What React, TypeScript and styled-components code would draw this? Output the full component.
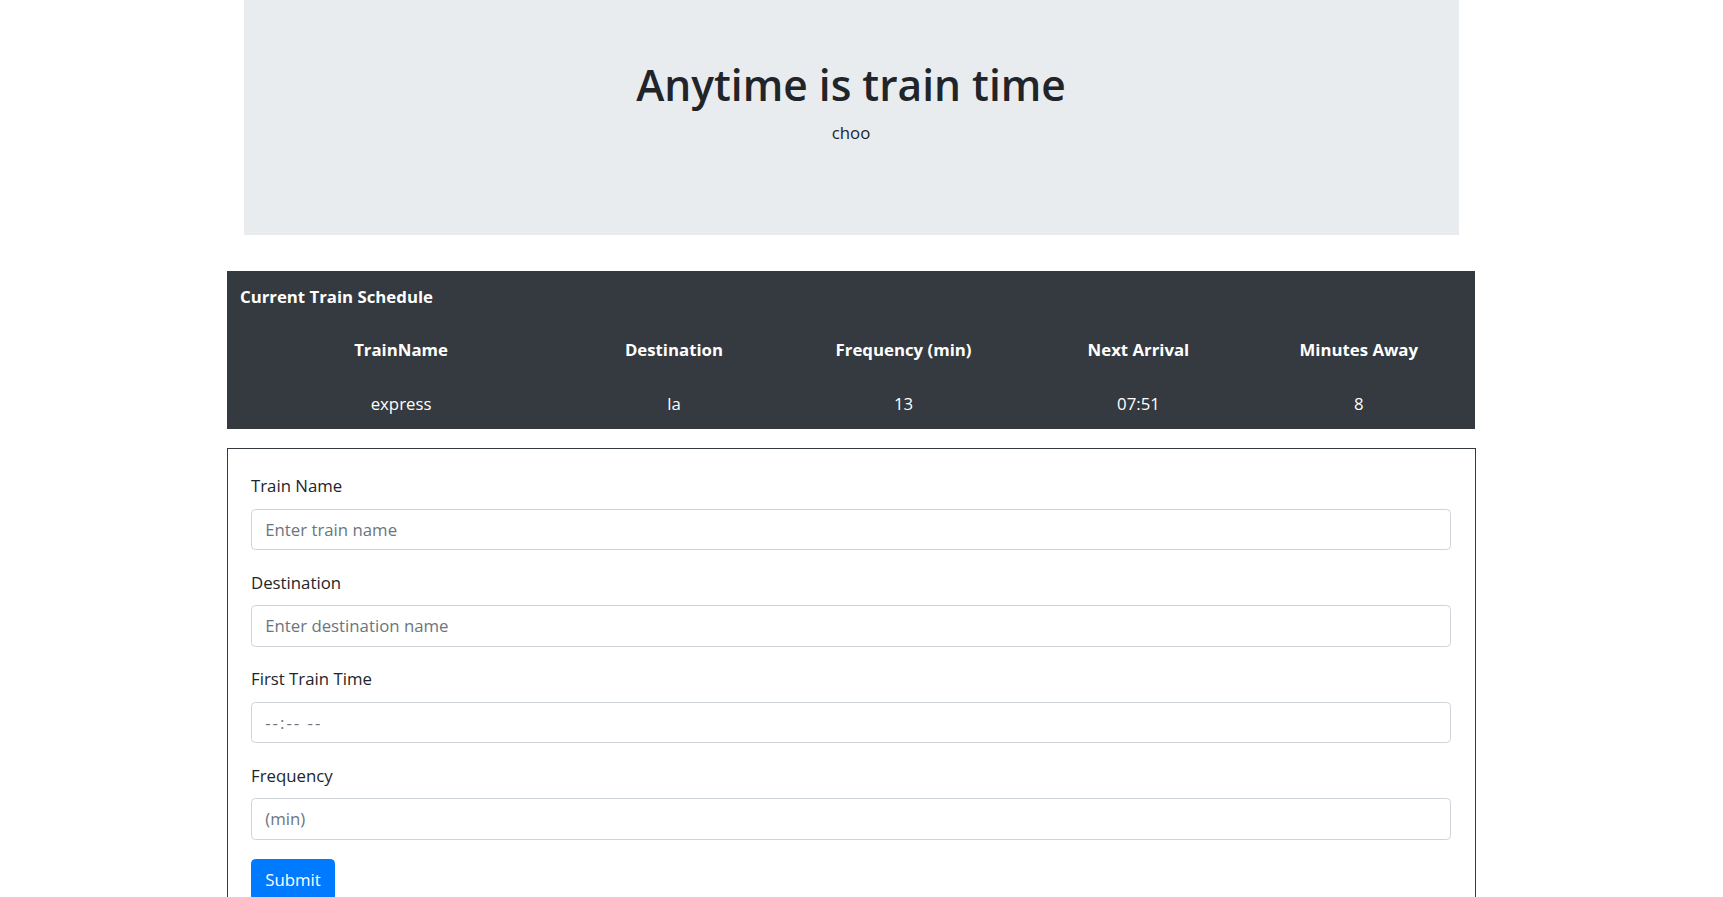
import React from "react";
import styled, { createGlobalStyle } from "styled-components";

const GlobalStyle = createGlobalStyle`
  html, body {
    margin: 0;
    padding: 0;
    background: #ffffff;
  }
  body {
    font-family: "Open Sans", "Noto Sans", sans-serif;
    font-size: 16.8px;
    line-height: 26.4px;
    color: #212529;
  }
  *, *::before, *::after { box-sizing: border-box; }
`;

const Page = styled.div`
  width: 1702px;
  padding-bottom: 40px;
`;

const Jumbotron = styled.header`
  width: 1215px;
  margin: 0 auto 36px;
  background: #e9ecef;
  padding: 58.7px 0 70.4px;
  text-align: center;
`;

const Title = styled.h1`
  margin: 0 0 8.8px;
  font-size: 42.5px;
  font-weight: 600;
  line-height: 52.8px;
  color: #212529;
`;

const Lead = styled.p`
  margin: 0 0 17.6px;
  font-weight: 400;
  color: #212529;
`;

const ScheduleTable = styled.table`
  width: 1248.5px;
  margin: 0 auto 18.8px;
  border-collapse: collapse;
  table-layout: fixed;
  background: #343a40;
  color: #ffffff;
`;

const Col = styled.col<{ $w?: number }>`
  width: ${(p) => (p.$w ? `${p.$w}px` : "auto")};
`;

const Caption = styled.th`
  padding: 13.2px;
  text-align: left;
  font-weight: 700;
  line-height: 26.4px;
`;

const HeadCell = styled.th`
  padding: 13.2px;
  text-align: center;
  font-weight: 700;
  line-height: 26.4px;
`;

const Cell = styled.td`
  padding: 15px 13.2px 11.4px;
  text-align: center;
  font-weight: 400;
  line-height: 26.4px;
`;

const FormCard = styled.form`
  width: 1249px;
  margin: 0 auto;
  border: 1px solid #343a40;
  padding: 24.5px 23.5px 30px;
`;

const Field = styled.div`
  margin-bottom: 19.5px;
`;

const Label = styled.label`
  display: block;
  margin-bottom: 8.8px;
  color: #212529;
`;

const Input = styled.input<{ $spacedHint?: boolean }>`
  display: block;
  width: 100%;
  height: 41.8px;
  padding: 6.6px 13.2px;
  font-family: inherit;
  font-size: 16.8px;
  line-height: 26.4px;
  color: #495057;
  background: #ffffff;
  border: 1px solid #ced4da;
  border-radius: 4.4px;
  outline: none;

  &::placeholder {
    color: #6c757d;
    opacity: 1;
    letter-spacing: ${(p) => (p.$spacedHint ? "2px" : "normal")};
  }
  &::-webkit-outer-spin-button,
  &::-webkit-inner-spin-button {
    -webkit-appearance: none;
    margin: 0;
  }
`;

const SubmitButton = styled.button`
  display: inline-block;
  padding: 6.6px 13.2px;
  font-family: inherit;
  font-size: 16.8px;
  line-height: 26.4px;
  color: #ffffff;
  background: #007bff;
  border: 1px solid #007bff;
  border-radius: 4.4px;
  cursor: pointer;
`;

const columns = [
  { label: "TrainName", w: 348.6 },
  { label: "Destination", w: 197.2 },
  { label: "Frequency (min)", w: 262 },
  { label: "Next Arrival", w: 207.8 },
  { label: "Minutes Away", w: 0 },
];

const trains = [
  { name: "express", destination: "la", frequency: "13", next: "07:51", away: "8" },
];

const fields = [
  { id: "train-name", label: "Train Name", placeholder: "Enter train name", type: "text", spaced: false },
  { id: "destination", label: "Destination", placeholder: "Enter destination name", type: "text", spaced: false },
  { id: "first-train", label: "First Train Time", placeholder: "--:-- --", type: "text", spaced: true },
  { id: "frequency", label: "Frequency", placeholder: "(min)", type: "number", spaced: false },
];

export default function App() {
  return (
    <>
      <GlobalStyle />
      <Page>
        <Jumbotron>
          <Title>Anytime is train time</Title>
          <Lead>choo</Lead>
        </Jumbotron>

        <ScheduleTable>
          <colgroup>
            {columns.map((c) => (
              <Col key={c.label} $w={c.w} />
            ))}
          </colgroup>
          <thead>
            <tr>
              <Caption colSpan={5}>Current Train Schedule</Caption>
            </tr>
            <tr>
              {columns.map((c) => (
                <HeadCell key={c.label}>{c.label}</HeadCell>
              ))}
            </tr>
          </thead>
          <tbody>
            {trains.map((t) => (
              <tr key={t.name}>
                <Cell>{t.name}</Cell>
                <Cell>{t.destination}</Cell>
                <Cell>{t.frequency}</Cell>
                <Cell>{t.next}</Cell>
                <Cell>{t.away}</Cell>
              </tr>
            ))}
          </tbody>
        </ScheduleTable>

        <FormCard onSubmit={(e) => e.preventDefault()}>
          {fields.map((f) => (
            <Field key={f.id}>
              <Label htmlFor={f.id}>{f.label}</Label>
              <Input id={f.id} type={f.type} placeholder={f.placeholder} $spacedHint={f.spaced} />
            </Field>
          ))}
          <SubmitButton type="submit">Submit</SubmitButton>
        </FormCard>
      </Page>
    </>
  );
}
